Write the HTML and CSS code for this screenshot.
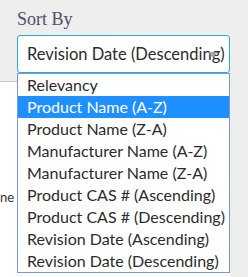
FILE: index.html
```html
<!DOCTYPE html>
<html lang="en">
<head>
  <meta charset="UTF-8">
  <meta name="viewport" content="width=device-width, initial-scale=1.0">
  <title>Sort By</title>
  <link rel="stylesheet" href="styles.css">
</head>
<body>
  <div class="filter">
    <label class="filter-label">Sort By</label>
    <div class="select-wrap">
      <div class="select">
        <span class="select-value">Revision Date (Descending)</span>
        <span class="caret"></span>
      </div>
      <ul class="options">
        <li class="option">Relevancy</li>
        <li class="option active">Product Name (A-Z)</li>
        <li class="option">Product Name (Z-A)</li>
        <li class="option">Manufacturer Name (A-Z)</li>
        <li class="option">Manufacturer Name (Z-A)</li>
        <li class="option">Product CAS # (Ascending)</li>
        <li class="option">Product CAS # (Descending)</li>
        <li class="option">Revision Date (Ascending)</li>
        <li class="option">Revision Date (Descending)</li>
      </ul>
    </div>
  </div>

  <div class="results">
    <div class="result-row">ne</div>
  </div>
</body>
</html>
```

FILE: styles.css
```css
body {
  margin: 0;
  background: #eeeeee;
  font-family: 'Lato', 'Liberation Sans', sans-serif;
  color: #2b2b2b;
  height: 277px;
  overflow: hidden;
}

.filter {
  padding: 8px 18px 0 17px;
}

.filter-label {
  display: block;
  font-family: 'Liberation Serif', serif;
  font-size: 18px;
  line-height: 22px;
  color: #4d5268;
  margin-bottom: 5px;
}

.select-wrap {
  position: relative;
}

.select {
  display: flex;
  align-items: center;
  height: 36px;
  padding-left: 9px;
  background: #fff;
  border: 1px solid #2aa9dc;
  border-radius: 3px;
  font-size: 16.5px;
  white-space: nowrap;
  position: relative;
}

.caret {
  position: absolute;
  right: 11px;
  top: 16px;
  width: 0;
  height: 0;
  border-left: 5px solid transparent;
  border-right: 5px solid transparent;
  border-top: 6px solid rgba(160, 160, 170, 0.85);
}

.options {
  position: absolute;
  top: 100%;
  left: 0;
  right: 0;
  margin: 0;
  padding: 0;
  list-style: none;
  background: #fff;
  border: 1px solid #7b96d4;
  z-index: 2;
}

.option {
  height: 22px;
  line-height: 22px;
  padding-left: 9px;
  font-size: 16px;
  white-space: nowrap;
  color: #2b2b2b;
}

.option.active {
  background: #1e90ff;
  color: #fff;
}

.results {
  margin-top: 8px;
  width: 230px;
  height: 200px;
  background: #fff;
  border-top: 1px solid #c8c8c8;
}

.result-row {
  padding: 107px 0 0 0;
  font-size: 13px;
  line-height: 16px;
  color: #333;
}
```
